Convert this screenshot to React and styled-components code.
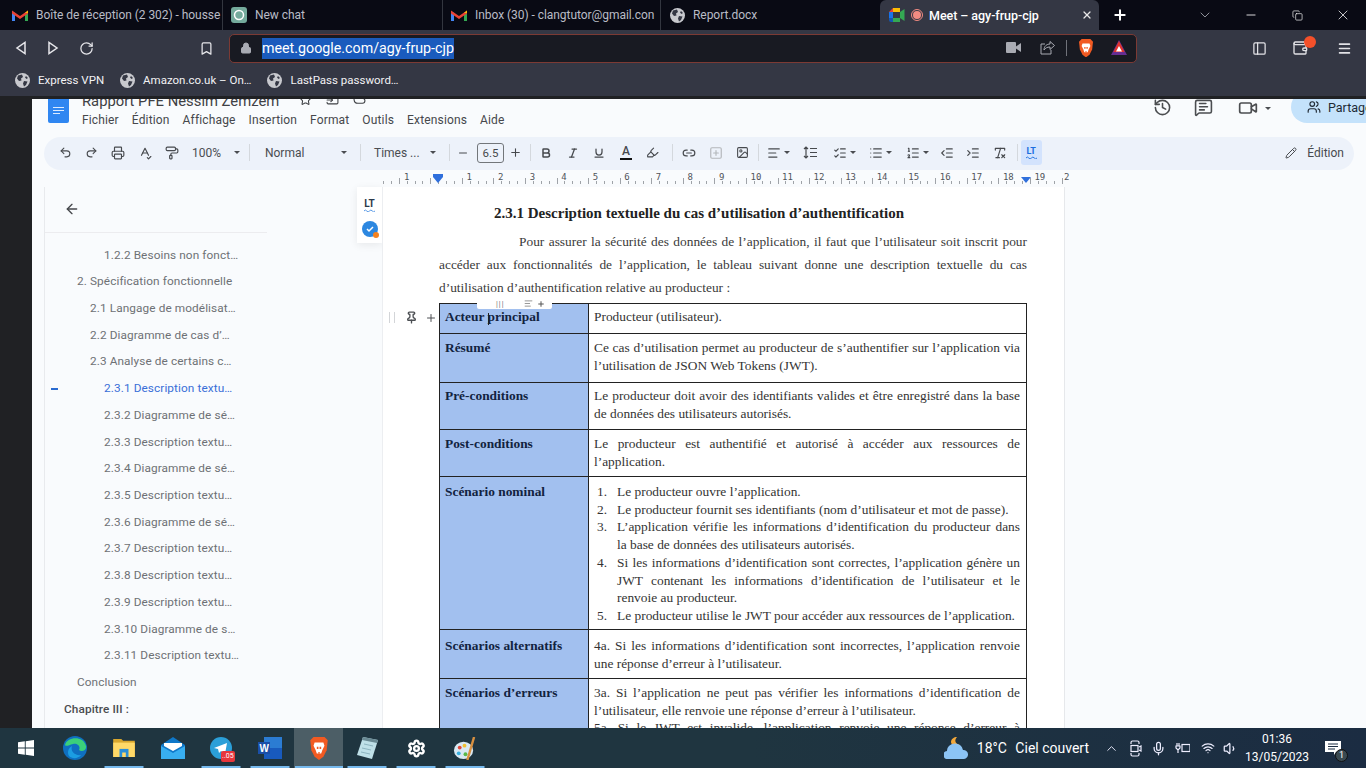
import React from "react";
import styled, { createGlobalStyle } from "styled-components";
import {
  ArrowLeft, AlignLeft, Bold, Cloud, Highlighter, History, Image, IndentDecrease, IndentIncrease, Italic,
  Link2, List, ListChecks, ListOrdered, Lock, MessageSquareText, Minus, PaintRoller, Pencil, Pin, Plus, Printer, Redo2, RemoveFormatting,
  RotateCw, SpellCheck, SquarePlus, Star, Underline, Undo2, Users, Video, X, Bookmark, ChevronDown, Copy, Menu, Wallet, PanelLeft,
  Settings, Mic, Wifi, Volume1, ChevronUp, FolderInput,
} from "lucide-react";

const GlobalStyle = createGlobalStyle`
  html, body { margin: 0; padding: 0; height: 100%; overflow: hidden; }
  body { font-family: "Roboto", "Liberation Sans", sans-serif; background: #202124; }
  * { box-sizing: border-box; }
  #root { height: 100%; }
`;

const Screen = styled.div`
  width: 1366px;
  height: 768px;
  display: flex;
  flex-direction: column;
  overflow: hidden;
  position: relative;
`;

/* ---- browser chrome ---- */
const TabStrip = styled.div`
  height: 30px;
  background: #090a14;
  display: flex;
  align-items: stretch;
  flex: none;
`;
const Tab = styled.div`
  width: ${p => p.$w}px;
  flex: none;
  display: flex;
  align-items: center;
  gap: 8px;
  padding-left: ${p => p.$pad || 8}px;
  font-size: 12px;
  letter-spacing: -0.05px;
  white-space: nowrap;
  overflow: hidden;
  color: #b9bcc6;
  border-right: 1px solid ${p => (p.$plain ? "transparent" : "#33363f")};
  height: 30px;
`;
const ActiveTab = styled(Tab)`
  background: #343744;
  color: #fff;
  font-size: 12.5px;
  font-weight: 500;
  gap: 6px;
  border-radius: 6px 6px 0 0;
  border-right: none;
`;
const TabClose = styled.span`
  display: flex;
  margin-left: auto;
  margin-right: 6px;
  color: #e8e8e8;
`;
const TabIcon = styled.span`
  display: flex;
  flex: none;
  width: 16px;
  height: 16px;
  align-items: center;
  justify-content: center;
`;
const WindowCtl = styled.div`
  flex: 1;
  display: flex;
  align-items: center;
  color: #fff;
`;
const NewTab = styled.span`
  display: flex;
  width: 42px;
  justify-content: center;
`;
const WinButtons = styled.div`
  margin-left: auto;
  display: flex;
  align-items: center;
`;
const WinBtn = styled.span`
  width: 46px;
  display: flex;
  justify-content: center;
  color: ${p => (p.$dim ? "#b0b2ba" : "#f4f4f4")};
`;
const Toolbar = styled.div`
  height: 36px;
  background: #343744;
  display: flex;
  align-items: center;
  flex: none;
  padding-left: 15px;
  color: #e6e6ea;
`;
const NavBtn = styled.span`
  display: flex;
  width: ${p => p.$w || 32}px;
  flex: none;
  justify-content: ${p => (p.$end ? "flex-end" : "flex-start")};
`;
const UrlBar = styled.div`
  width: 908px;
  height: 29px;
  margin-left: 15px;
  background: #181a22;
  border: 1.5px solid #7c3a34;
  border-radius: 5px;
  display: flex;
  align-items: center;
  padding-left: 10px;
  font-size: 14.25px;
  color: #fff;
  flex: none;
`;
const Selected = styled.span`
  background: #1a5bbd;
  margin-left: 10px;
  line-height: 21px;
`;
const UrlRight = styled.div`
  margin-left: auto;
  display: flex;
  align-items: center;
  gap: 11px;
  padding-right: 9px;
  color: #a9abb3;
`;
const UrlGlyph = styled.span`
  display: flex;
  margin-left: ${p => p.$m || 0}px;
`;
const UrlDivider = styled.span`
  width: 1px;
  height: 16px;
  background: #70727a;
`;
const ToolRight = styled.div`
  display: flex;
  align-items: center;
  margin-left: 115px;
  gap: 25px;
  color: #e2e2e6;
`;
const Wal = styled.span`
  position: relative;
  display: flex;
  margin-right: 4px;
`;
const WalDot = styled.span`
  position: absolute;
  top: -4px;
  right: -8px;
  width: 12px;
  height: 12px;
  border-radius: 50%;
  background: #f4502a;
`;
const Bookmarks = styled.div`
  height: 30px;
  background: #343744;
  display: flex;
  align-items: center;
  padding: 0 0 2px 15px;
  gap: 16px;
  font-size: 11.5px;
  color: #f2f2f4;
  flex: none;
`;
const Bm = styled.span`
  display: flex;
  align-items: center;
  gap: 8px;
`;
const Edge = styled.div`
  height: 3px;
  background: #202124;
  flex: none;
`;

/* ---- docs ---- */
const Meet = styled.div`
  flex: 1;
  display: flex;
  min-height: 0;
  background: #202124;
`;
const Docs = styled.div`
  margin-left: 32px;
  flex: 1;
  background: #f9fbfd;
  display: flex;
  flex-direction: column;
  padding-left: 12px;
  min-width: 0;
  overflow: hidden;
`;
const Head = styled.div`
  display: flex;
  flex: none;
  height: 29px;
`;
const DocIcon = styled.div`
  width: 21px;
  height: 24px;
  margin-left: 4px;
  background: #2f86f1;
  border-radius: 0 0 2px 2px;
  flex: none;
  display: flex;
  flex-direction: column;
  gap: 2px;
  padding: 8px 0 0 5px;
`;
const DocLine = styled.span`
  height: 1px;
  width: ${p => p.$w || 11}px;
  background: #dcebff;
`;
const HeadMain = styled.div`
  margin-left: 13px;
  display: flex;
  flex-direction: column;
`;
const DocTitle = styled.div`
  height: 9px;
  display: flex;
  align-items: flex-end;
  gap: 14px;
  font-size: 14.8px;
  color: #3f4145;
  white-space: nowrap;
  svg { margin-bottom: 2px; }
`;
const DocTitleText = styled.span`
  line-height: 14px;
  margin-right: 6px;
`;
const MenuRow = styled.div`
  display: flex;
  gap: 13px;
  font-size: 12px;
  letter-spacing: 0.15px;
  color: #46484c;
  margin-top: 5px;
  line-height: 15px;
`;
const HeadRight = styled.div`
  margin-left: auto;
  display: flex;
  align-items: flex-start;
  color: #4b4d50;
`;
const ShareBtn = styled.div`
  width: 75px;
  height: 32px;
  margin: -8px 0 0 20px;
  background: #c4e2fb;
  border-radius: 16px 0 0 16px;
  display: flex;
  align-items: center;
  gap: 7px;
  padding-left: 16px;
  font-size: 12.5px;
  color: #202a35;
  overflow: hidden;
  white-space: nowrap;
  svg { flex: none; }
`;
const HIcon = styled.span`
  display: flex;
  align-items: center;
  margin: -1px 0 0 ${p => p.$m || 0}px;
`;
const Pill = styled.div`
  height: 33px;
  margin: 9px 12px 0 0;
  background: #edf2fa;
  border-radius: 17px;
  display: flex;
  align-items: center;
  padding: 0 0 2px 8px;
  flex: none;
  color: #474a4e;
  font-size: 12px;
`;
const TB = styled.span`
  display: flex;
  align-items: center;
  justify-content: center;
  width: ${p => p.$w || 26.6}px;
  flex: none;
`;
const Sep = styled.span`
  width: 1px;
  height: 17px;
  background: #d4d8dd;
  margin: 0 ${p => p.$r ?? 7}px 0 ${p => p.$l ?? 7}px;
  flex: none;
`;
const Combo = styled.span`
  display: flex;
  align-items: center;
  width: ${p => p.$w}px;
  padding-left: ${p => p.$pad}px;
  color: #4a4d51;
  flex: none;
`;
const Caret = styled.span`
  margin-left: auto;
  margin-right: ${p => p.$r ?? 6}px;
  width: 0;
  height: 0;
  border-left: 3px solid transparent;
  border-right: 3px solid transparent;
  border-top: 3px solid #4a4d51;
`;
const SmallCaret = styled(Caret)`
  margin: 0 0 0 3px;
  flex: none;
`;
const HeadCaret = styled(SmallCaret)`
  margin: 0 0 0 7px;
`;
const SizeBox = styled.span`
  width: 27px;
  height: 20px;
  margin-left: 7px;
  border: 1px solid #72767a;
  border-radius: 3px;
  text-align: center;
  line-height: 18px;
  font-size: 11.5px;
  flex: none;
`;
const ColorA = styled.span`
  border-bottom: 2px solid #111;
  font-weight: 500;
  line-height: 13px;
  padding: 0 2px;
`;
const LtBtn = styled.span`
  width: 21px;
  height: 25px;
  background: #d3e3fd;
  border-radius: 3px;
  color: #1a6ee0;
  font-size: 9px;
  font-weight: 700;
  display: flex;
  flex-direction: column;
  align-items: center;
  justify-content: center;
  flex: none;
`;
const Edition = styled.span`
  margin-left: auto;
  margin-right: 10px;
  display: flex;
  align-items: center;
  gap: 10px;
`;
const Ruler = styled.div`
  height: 17px;
  flex: none;
  position: relative;
  overflow: hidden;
`;
const RulerNum = styled.span`
  position: absolute;
  top: 2px;
  font-size: 9px;
  line-height: 10px;
  color: #50535a;
  font-family: "DejaVu Sans Mono", monospace;
`;
const RulerTick = styled.span`
  position: absolute;
  bottom: 3px;
  width: 1px;
  height: ${p => (p.$long ? 6 : 3)}px;
  background: #9fa3a8;
`;
const Marker = styled.span`
  position: absolute;
  bottom: 4px;
  width: 0;
  height: 0;
  border-left: 5px solid transparent;
  border-right: 5px solid transparent;
  border-top: 6px solid #2f6fdc;
  &::before {
    content: "";
    display: ${p => (p.$bar ? "block" : "none")};
    position: absolute;
    left: -5px;
    top: -9px;
    width: 10px;
    height: 3px;
    background: #2f6fdc;
  }
`;
const Body = styled.div`
  flex: 1;
  display: flex;
  min-height: 0;
`;
const Side = styled.div`
  width: 338px;
  flex: none;
  display: flex;
  flex-direction: column;
  overflow: hidden;
  border-left: 1px solid #e8eaed;
`;
const Back = styled.div`
  height: 46px;
  margin-right: 115px;
  border-bottom: 1px solid #ececef;
  padding: 14px 0 0 19px;
  color: #45474b;
  flex: none;
`;
const Outline = styled.div`
  padding-top: 8.5px;
  display: flex;
  flex-direction: column;
`;
const Item = styled.div`
  height: 26.72px;
  line-height: 26.72px;
  padding-left: ${p => p.$lvl}px;
  font-size: 11.8px;
  letter-spacing: 0.1px;
  color: ${p => (p.$on ? "#3a6fd8" : p.$strong ? "#4a4c50" : "#6e7175")};
  font-weight: ${p => (p.$strong ? 500 : 400)};
  position: relative;
  white-space: nowrap;
`;
const Dash = styled.span`
  position: absolute;
  left: 6px;
  top: 13px;
  width: 7px;
  height: 1.5px;
  background: #2a6bd0;
`;
const Canvas = styled.div`
  flex: 1;
  display: flex;
  min-width: 0;
  position: relative;
`;
const Lt = styled.div`
  position: absolute;
  left: -25px;
  top: 0;
  width: 25px;
  height: 56px;
  background: #fff;
  box-shadow: 0 2px 8px rgba(0, 0, 0, 0.08);
  display: flex;
  flex-direction: column;
  align-items: center;
  padding-top: 11px;
  gap: 9px;
`;
const LtMark = styled.span`
  display: flex;
  flex-direction: column;
  align-items: center;
  font-size: 10px;
  font-weight: 700;
  color: #2c3a4a;
  line-height: 11px;
`;
const Badge = styled.span`
  width: 16px;
  height: 16px;
  border-radius: 50%;
  background: #2c87e0;
  position: relative;
  display: flex;
  align-items: center;
  justify-content: center;
`;
const BadgeDot = styled.span`
  position: absolute;
  right: -1px;
  bottom: -1px;
  width: 6px;
  height: 6px;
  border-radius: 50%;
  background: #f5821f;
`;
const Page = styled.div`
  width: 683px;
  flex: none;
  background: #fff;
  border-left: 1px solid #eceef1;
  border-right: 1px solid #e6e8eb;
  padding: 17px 37px 0 56px;
  font-family: "Liberation Serif", "Times New Roman", serif;
  color: #2c2c2c;
  position: relative;
  overflow: hidden;
`;
const Heading = styled.div`
  font-weight: 700;
  font-size: 15px;
  line-height: 18px;
  color: #222;
  padding-left: 55px;
  white-space: nowrap;
`;
const Para = styled.p`
  margin: 7.5px 0 4.5px;
  font-size: 13.4px;
  line-height: 23px;
  text-align: justify;
  color: #3a3a3a;
`;
const ParaFirst = styled.span`
  display: inline-block;
  width: 80px;
`;
const Table = styled.div`
  border: 1px solid #222;
  border-bottom: none;
  display: grid;
  grid-template-columns: 149px 1fr;
  font-size: 13.4px;
  line-height: 17.7px;
`;
const Label = styled.div`
  background: #a2c0ef;
  border-bottom: 1px solid #222;
  border-right: 1px solid #222;
  padding: ${p => p.$pad ?? 5}px 6px 0 5px;
  font-weight: 700;
  color: #12233f;
  height: ${p => p.$h}px;
`;
const Cell = styled.div`
  border-bottom: 1px solid #222;
  padding: ${p => p.$pad ?? 5}px 6px 0 5px;
  color: #333;
  text-align: justify;
  height: ${p => p.$h}px;
`;
const ContinuedLine = styled.span`
  display: block;
  text-align-last: justify;
`;
const Steps = styled.ol`
  margin: 0;
  padding: 0 0 0 23px;
  list-style: none;
  counter-reset: step;
`;
const Step = styled.li`
  position: relative;
  counter-increment: step;
  &::before {
    content: counter(step) ".";
    position: absolute;
    left: -20px;
  }
`;
const Handles = styled.div`
  position: absolute;
  left: 6px;
  top: 124px;
  display: flex;
  align-items: center;
  color: #4c4f53;
  gap: 7px;
`;
const Grip = styled.span`
  width: 6px;
  height: 11px;
  border-left: 1px solid #d3d5d8;
  border-right: 1px solid #d3d5d8;
  margin-right: 3px;
`;
const ColBar = styled.div`
  position: absolute;
  left: 94px;
  top: 111px;
  width: 75px;
  height: 11px;
  background: #fff;
  border-radius: 2px;
  display: flex;
  align-items: center;
  color: #777;
  padding-left: 19px;
  font-size: 7px;
  font-family: "Liberation Sans", sans-serif;
`;
const ColGrip = styled.span`
  width: 28px;
  letter-spacing: 1px;
`;
const ColAdd = styled.span`
  display: flex;
  margin-left: 4px;
  color: #555;
`;
const Cursor = styled.span`
  position: absolute;
  left: 105px;
  top: 126px;
  width: 1px;
  height: 12px;
  background: #222;
`;

/* ---- taskbar ---- */
const Taskbar = styled.div`
  height: 40px;
  background: linear-gradient(90deg, #1f3540 0%, #1f3540 55%, #1b2c42 100%);
  display: flex;
  align-items: center;
  flex: none;
`;
const TaskIcon = styled.span`
  width: ${p => p.$w || 48.7}px;
  height: 40px;
  flex: none;
  display: flex;
  align-items: center;
  justify-content: center;
  position: relative;
  background: ${p => (p.$on ? "#4c5e66" : "transparent")};
  &::after {
    content: "";
    display: ${p => (p.$run ? "block" : "none")};
    position: absolute;
    bottom: 0;
    left: 50%;
    transform: translateX(-50%);
    width: ${p => (p.$on ? 48 : 39)}px;
    height: 2px;
    background: #76b9ed;
  }
`;
const TeleBadge = styled.span`
  position: absolute;
  left: 24px;
  bottom: 6px;
  background: #e8363c;
  color: #fff;
  font-size: 7px;
  line-height: 9px;
  padding: 1px;
  border-radius: 2px;
`;
const Tray = styled.div`
  margin: 0 11px 0 auto;
  display: flex;
  align-items: center;
  color: #fff;
  font-size: 14px;
`;
const Weather = styled.span`
  display: flex;
  align-items: center;
  gap: 8.5px;
  margin-right: 10.5px;
  white-space: nowrap;
`;
const TrayIcon = styled.span`
  display: flex;
  width: ${p => p.$w}px;
  justify-content: center;
  color: #eef;
`;
const Clock = styled.div`
  width: 68px;
  margin-left: 3.5px;
  text-align: center;
  font-size: 12px;
  line-height: 18px;
`;
const Notif = styled.div`
  width: 44px;
  display: flex;
  justify-content: center;
  position: relative;
`;
const NotifCount = styled.span`
  position: absolute;
  left: 24px;
  top: 8px;
  width: 13px;
  height: 13px;
  background: #3a4a52;
  border-radius: 50%;
  border: 1px solid #111;
  font-size: 9px;
  text-align: center;
  line-height: 11px;
`;

const Gmail = () => (
  <svg width="16" height="12" viewBox="0 0 16 12">
    <path d="M0 12V2l3 2v8z" fill="#4285f4" />
    <path d="M13 12V4l3-2v10z" fill="#34a853" />
    <path d="M0 1.500 8 7l8-5.500v3L8 10 0 4.500z" fill="#ea4335" />
    <path d="M13 4l3-2.500V4z" fill="#fbbc04" />
  </svg>
);
const MeetLogo = () => (
  <svg width="16" height="14" viewBox="0 0 16 14">
    <path d="M0 4 4 0v4z" fill="#ea4335" />
    <path d="M0 4h4v6H0z" fill="#1a73e8" />
    <path d="M0 10h4v4H2a2 2 0 0 1-2-2z" fill="#1557b0" />
    <path d="M4 10h7v4H4z" fill="#34a853" />
    <path d="M11 4 15.500 1v12L11 10z" fill="#34a853" />
    <path d="M4 0h7v4H4z" fill="#fbbc04" />
  </svg>
);
const GlobeSolid = () => (
  <svg width="15" height="15" viewBox="0 0 15 15">
    <circle cx="7.500" cy="7.500" r="7.500" fill="#c8c9ce" />
    <path d="M3 2.500 7 1.500 8 4 6 5.500 6.500 7.500 4 8 2 5.500zM9 8l3.500.5L11 12l-2 1.500-1-3zM11 3l2 2-1.500 1L10 4.500z" fill="#343744" />
  </svg>
);
const Lion = ({ size = 18 }) => (
  <svg width={size} height={size * 1.15} viewBox="0 0 18 21">
    <path d="M4 0h10l3 3-1 9-3 6-4 3-4-3-3-6-1-9z" fill="#f15a22" />
    <path d="M5 5h8l1 3-2 4-1 3H7l-1-3-2-4z" fill="#fff" />
    <path d="M7 9h1.500v2H7zM9.500 9H11v2H9.500zM8 14h2l-1 2z" fill="#f15a22" />
  </svg>
);
const Triangle = () => (
  <svg width="16" height="15" viewBox="0 0 16 15">
    <path d="M8 0 16 15H0z" fill="#662d91" />
    <path d="M8 1 13.500 12H2.500z" fill="#e2342b" />
    <path d="M8 6l3 5.500H5z" fill="#fff" />
  </svg>
);
const CamFill = () => (
  <svg width="15" height="11" viewBox="0 0 15 11" fill="#a9abb3">
    <rect width="10" height="11" rx="1" />
    <path d="M10 4.500 15 1v9l-5-3.500z" />
  </svg>
);
const ShareOut = () => (
  <svg width="15" height="15" viewBox="0 0 15 15" fill="none" stroke="#a9abb3">
    <path d="M5 4H1v10h10v-4" />
    <path d="M4 10c0-4 3-6 6-6V1.500L14.500 5.500 10 9.500V7c-3 0-4.500 1-6 3z" />
  </svg>
);
const LineSpacing = () => (
  <svg width="14" height="13" viewBox="0 0 14 13" fill="none" stroke="#474a4e" strokeWidth="1.200">
    <path d="M7 2.500h7M7 6.500h7M7 10.500h7M3 1v11M1 3l2-2 2 2M1 10l2 2 2-2" />
  </svg>
);
const Wave = ({ width = 11, color = "#4a90e2" }) => (
  <svg width={width} height="3" viewBox="0 0 12 3" fill="none" stroke={color}>
    <path d="M0 2q1.500-2 3 0t3 0 3 0 3 0" />
  </svg>
);
const WinLogo = () => (
  <svg width="16" height="16" viewBox="0 0 16 16" fill="#fff">
    <path d="M0 2.300 6.800 1.300V7.500H0zM7.700 1.200 16 0v7.500H7.700zM0 8.400h6.800v6.300L0 13.700zM7.700 8.400H16V16l-8.300-1.200z" />
  </svg>
);
const EdgeLogo = () => (
  <svg width="24" height="24" viewBox="0 0 24 24">
    <circle cx="12" cy="12" r="12" fill="#0f6fc0" />
    <path d="M2 9C4 1 20-1 23 10c1 5-5 6-7 4 2-4-2-7-6-6-4 1-7 3-8 1z" fill="#3bd07a" />
    <path d="M9 10c-2 5 3 10 9 9-3 4-9 4-12 1-2-3-1-8 3-10z" fill="#1b9de2" />
  </svg>
);
const Folder = () => (
  <svg width="22" height="18" viewBox="0 0 24 20">
    <path d="M0 0h9l2 2h13v18H0z" fill="#d9a72e" />
    <path d="M0 4h24v16H0z" fill="#ffd968" />
    <path d="M7 11h10v9H7z" fill="#2a8fd8" />
    <path d="M10 15h4v5h-4z" fill="#ffd968" />
  </svg>
);
const Mail = () => (
  <svg width="24" height="22" viewBox="0 0 24 22">
    <path d="M0 8 12 0l12 8v14H0z" fill="#0f78c9" />
    <path d="M0 9l12 7 12-7v13H0z" fill="#38aef0" />
    <path d="M3 6h18v3l-9 5-9-5z" fill="#fff" />
  </svg>
);
const Telegram = () => (
  <svg width="22" height="22" viewBox="0 0 22 22">
    <circle cx="11" cy="11" r="11" fill="#2b9fd8" />
    <path d="M4 11 17 6l-2 11-4-3-2 2-1-4z" fill="#fff" />
  </svg>
);
const Word = () => (
  <svg width="24" height="22" viewBox="0 0 24 22">
    <path d="M6 0h18v22H6z" fill="#2b7cd3" />
    <path d="M6 11h18v11H6z" fill="#185abd" />
    <path d="M0 5h12v12H0z" fill="#1a4fa8" />
    <text x="1.500" y="15" fontSize="10" fontWeight="700" fill="#fff" fontFamily="Liberation Sans">W</text>
  </svg>
);
const Notepad = () => (
  <svg width="23" height="22" viewBox="0 0 23 22">
    <path d="M7 0 22 3 16 22 1 18z" fill="#bfe0e8" />
    <path d="M7 0 22 3 21 6 6 3z" fill="#6a8a94" />
    <path d="M8 7l9 2M6 11l9 2M5 15l9 2" stroke="#8db4c0" />
  </svg>
);
const Paint = () => (
  <svg width="23" height="23" viewBox="0 0 24 24">
    <ellipse cx="11" cy="14" rx="10" ry="9" fill="#d8e8f2" />
    <circle cx="7" cy="11" r="2" fill="#e0473a" />
    <circle cx="12" cy="9" r="2" fill="#f0c030" />
    <circle cx="6" cy="17" r="2" fill="#3ab0e0" />
    <circle cx="13" cy="18" r="2" fill="#58b848" />
    <path d="M22 0 15 24" stroke="#d89040" strokeWidth="2.500" />
  </svg>
);
const CloudMoon = () => (
  <svg width="24" height="22" viewBox="0 0 24 22">
    <path d="M13 0c-3 3-2 7 3 8-4 2-9 0-9-3 0-3 3-5 6-5z" fill="#f3a83b" />
    <path d="M4 22a4 4 0 0 1-1-8 8 7 0 0 1 16-1 4.500 4.500 0 0 1 1 9z" fill="#8cc4f5" />
  </svg>
);
const WebCam = () => (
  <svg width="12" height="17" viewBox="0 0 12 17" fill="none" stroke="#eef" strokeWidth="1.200">
    <path d="M1 4V2.500A1.500 1.500 0 0 1 2.500 1h5A1.500 1.500 0 0 1 9 2.500V4M1 13v1.500A1.500 1.500 0 0 0 2.500 16h5A1.500 1.500 0 0 0 9 14.500V13" />
    <rect x="1" y="5.500" width="7" height="6" />
    <path d="M9 7l2-1v5l-2-1" />
  </svg>
);
const PowerPlug = () => (
  <svg width="15" height="12" viewBox="0 0 15 12" fill="none" stroke="#eef" strokeWidth="1.200">
    <path d="M2 1v3M4 1v3M1 4h4v2l-2 2-2-2zM3 8v3" />
    <rect x="7" y="2.500" width="8" height="7" />
  </svg>
);
const NotifNote = () => (
  <svg width="16" height="14" viewBox="0 0 16 14">
    <path d="M0 0h16v11h-5l-2 3v-3H0z" fill="#fff" />
    <path d="M3 3h10M3 5.500h10M3 8h7" stroke="#1b2c42" />
  </svg>
);

const outline = [
  ["1.2.2 Besoins non fonct…", 59],
  ["2. Spécification fonctionnelle", 32],
  ["2.1 Langage de modélisat…", 45],
  ["2.2 Diagramme de cas d’…", 45],
  ["2.3 Analyse de certains c…", 45],
  ["2.3.1 Description textu…", 59, true],
  ["2.3.2 Diagramme de sé…", 59],
  ["2.3.3 Description textu…", 59],
  ["2.3.4 Diagramme de sé…", 59],
  ["2.3.5 Description textu…", 59],
  ["2.3.6 Diagramme de sé…", 59],
  ["2.3.7 Description textu…", 59],
  ["2.3.8 Description textu…", 59],
  ["2.3.9 Description textu…", 59],
  ["2.3.10 Diagramme de s…", 59],
  ["2.3.11 Description textu…", 59],
  ["Conclusion", 32],
];

const rulerNums = [
  [407, "1"],
  ...Array.from({ length: 19 }, (_, i) => [438 + 31.55 * (i + 1), String(i + 1)]),
  [1067, "2"],
];

export default function App() {
  return (
    <>
      <GlobalStyle />
      <Screen>
        <TabStrip>
          <Tab $w={223} $pad={12}><TabIcon><Gmail /></TabIcon>Boîte de réception (2 302) - housse</Tab>
          <Tab $w={220}><TabIcon><svg width="16" height="16" viewBox="0 0 16 16"><rect width="16" height="16" rx="3" fill="#74aa9c" /><circle cx="8" cy="8" r="4.500" fill="none" stroke="#fff" strokeWidth="1.500" /></svg></TabIcon>New chat</Tab>
          <Tab $w={218}><TabIcon><Gmail /></TabIcon>Inbox (30) - clangtutor@gmail.con</Tab>
          <Tab $w={219} $plain><TabIcon><GlobeSolid /></TabIcon>Report.docx</Tab>
          <ActiveTab $w={219} $pad={9}>
            <MeetLogo />
            <svg width="12" height="12" viewBox="0 0 12 12"><circle cx="6" cy="6" r="5.500" fill="none" stroke="#f28b82" /><circle cx="6" cy="6" r="4" fill="#f28b82" /></svg>
            Meet – agy-frup-cjp
            <TabClose><X size={12} strokeWidth={2.5} /></TabClose>
          </ActiveTab>
          <WindowCtl>
            <NewTab><Plus size={16} strokeWidth={3} /></NewTab>
            <WinButtons>
              <WinBtn $dim><ChevronDown size={16} strokeWidth={1.2} /></WinBtn>
              <WinBtn><Minus size={14} strokeWidth={1.5} /></WinBtn>
              <WinBtn><Copy size={11} strokeWidth={1.5} /></WinBtn>
              <WinBtn><X size={16} strokeWidth={1.2} /></WinBtn>
            </WinButtons>
          </WindowCtl>
        </TabStrip>
        <Toolbar>
          <NavBtn><svg width="13" height="14" viewBox="0 0 13 14" fill="none" stroke="#e6e6ea" strokeWidth="1.500"><path d="M10 1.500v11L2 7z" /></svg></NavBtn>
          <NavBtn><svg width="13" height="14" viewBox="0 0 13 14" fill="none" stroke="#e6e6ea" strokeWidth="1.500"><path d="M2 1.500v11L10 7z" /></svg></NavBtn>
          <NavBtn $w={27}><RotateCw size={15} /></NavBtn>
          <NavBtn $w={108} $end><Bookmark size={15} /></NavBtn>
          <UrlBar>
            <Lock size={12} fill="#a9abb3" color="#a9abb3" />
            <Selected>meet.google.com/agy-frup-cjp</Selected>
            <UrlRight>
              <CamFill />
              <UrlGlyph $m={8}><ShareOut /></UrlGlyph>
              <UrlDivider />
              <Lion size={16} />
              <UrlGlyph $m={6}><Triangle /></UrlGlyph>
            </UrlRight>
          </UrlBar>
          <ToolRight>
            <PanelLeft size={15} />
            <Wal><Wallet size={16} /><WalDot /></Wal>
            <Menu size={15} strokeWidth={2.5} />
          </ToolRight>
        </Toolbar>
        <Bookmarks>
          <Bm><GlobeSolid />Express VPN</Bm>
          <Bm><GlobeSolid />Amazon.co.uk – On…</Bm>
          <Bm><GlobeSolid />LastPass password…</Bm>
        </Bookmarks>
        <Edge />
        <Meet>
          <Docs>
            <Head>
              <DocIcon><DocLine /><DocLine /><DocLine $w={7} /></DocIcon>
              <HeadMain>
                <DocTitle>
                  <DocTitleText>Rapport PFE Nessim Zemzem</DocTitleText>
                  <Star size={13} /><FolderInput size={13} /><Cloud size={13} />
                </DocTitle>
                <MenuRow>
                  <span>Fichier</span><span>Édition</span><span>Affichage</span><span>Insertion</span>
                  <span>Format</span><span>Outils</span><span>Extensions</span><span>Aide</span>
                </MenuRow>
              </HeadMain>
              <HeadRight>
                <HIcon><History size={19} /></HIcon>
                <HIcon $m={22}><MessageSquareText size={19} /></HIcon>
                <HIcon $m={25}><Video size={20} /><HeadCaret /></HIcon>
                <ShareBtn><Users size={14} />Partager</ShareBtn>
              </HeadRight>
            </Head>
            <Pill>
              <TB><Undo2 size={13} /></TB><TB><Redo2 size={13} /></TB><TB><Printer size={14} /></TB><TB><SpellCheck size={14} /></TB><TB><PaintRoller size={14} /></TB>
              <Combo $w={57} $pad={7}>100%<Caret $r={2} /></Combo>
              <Sep />
              <Combo $w={96} $pad={8}>Normal<Caret /></Combo>
              <Sep />
              <Combo $w={74} $pad={6}>Times ...<Caret /></Combo>
              <Sep />
              <TB $w={13}><Minus size={12} /></TB><SizeBox>6.5</SizeBox><TB $w={24}><Plus size={13} /></TB>
              <Sep $l={2} $r={2} />
              <TB><Bold size={12} strokeWidth={3} /></TB><TB><Italic size={12} strokeWidth={2.5} /></TB><TB><Underline size={12} strokeWidth={2.5} /></TB><TB><ColorA>A</ColorA></TB><TB><Highlighter size={13} /></TB>
              <Sep $l={6} $r={3} />
              <TB><Link2 size={14} /></TB><TB><SquarePlus size={14} color="#b4b7bb" /></TB><TB><Image size={13} /></TB>
              <Sep $l={2} $r={3} />
              <TB $w={34}><AlignLeft size={14} /><SmallCaret /></TB>
              <TB $w={28}><LineSpacing /></TB>
              <TB $w={41}><ListChecks size={14} /><SmallCaret /></TB>
              <TB $w={32}><List size={14} /><SmallCaret /></TB>
              <TB $w={41}><ListOrdered size={14} /><SmallCaret /></TB>
              <TB $w={18}><IndentDecrease size={14} /></TB>
              <TB $w={34}><IndentIncrease size={14} /></TB>
              <TB $w={20}><RemoveFormatting size={14} /></TB>
              <Sep $l={7} $r={3} />
              <LtBtn>LT<Wave width={11} color="#1a6ee0" /></LtBtn>
              <Edition><Pencil size={12} />Édition</Edition>
            </Pill>
            <Ruler>
              {rulerNums.map(([x, n]) => <RulerNum key={x} style={{ left: x - 47 }}>{n}</RulerNum>)}
              {Array.from({ length: 87 }, (_, i) => <RulerTick key={i} $long={i % 4 === 2} style={{ left: 339 + i * 7.89 }} />)}
              <Marker $bar style={{ left: 389 }} /><Marker style={{ left: 977 }} />
            </Ruler>
            <Body>
              <Side>
                <Back><ArrowLeft size={16} /></Back>
                <Outline>
                  {outline.map(([t, l, on]) => (
                    <Item key={t} $lvl={l} $on={on}>{on && <Dash />}{t}</Item>
                  ))}
                  <Item $lvl={19} $strong>Chapitre III :</Item>
                </Outline>
              </Side>
              <Canvas>
                <Lt>
                  <LtMark>LT<Wave /></LtMark>
                  <Badge><svg width="10" height="10" viewBox="0 0 10 10" fill="none" stroke="#fff" strokeWidth="1.500"><path d="m2 5 2 2 4-4" /></svg><BadgeDot /></Badge>
                </Lt>
                <Page>
                  <Heading>2.3.1 Description textuelle du cas d’utilisation d’authentification</Heading>
                  <Para><ParaFirst />Pour assurer la sécurité des données de l’application, il faut que l’utilisateur soit inscrit pour accéder aux fonctionnalités de l’application, le tableau suivant donne une description textuelle du cas d’utilisation d’authentification relative au producteur :</Para>
                  <Table>
                    <Label $h={30} $pad={4}>Acteur principal</Label><Cell $h={30} $pad={4}>Producteur (utilisateur).</Cell>
                    <Label $h={49}>Résumé</Label><Cell $h={49}>Ce cas d’utilisation permet au producteur de s’authentifier sur l’application via l’utilisation de JSON Web Tokens (JWT).</Cell>
                    <Label $h={47} $pad={4}>Pré-conditions</Label><Cell $h={47} $pad={4}>Le producteur doit avoir des identifiants valides et être enregistré dans la base de données des utilisateurs autorisés.</Cell>
                    <Label $h={47}>Post-conditions</Label><Cell $h={47}>Le producteur est authentifié et autorisé à accéder aux ressources de l’application.</Cell>
                    <Label $h={153} $pad={6}>Scénario nominal</Label>
                    <Cell $h={153} $pad={6}>
                      <Steps>
                        <Step>Le producteur ouvre l’application.</Step>
                        <Step>Le producteur fournit ses identifiants (nom d’utilisateur et mot de passe).</Step>
                        <Step>L’application vérifie les informations d’identification du producteur dans la base de données des utilisateurs autorisés.</Step>
                        <Step>Si les informations d’identification sont correctes, l’application génère un JWT contenant les informations d’identification de l’utilisateur et le renvoie au producteur.</Step>
                        <Step>Le producteur utilise le JWT pour accéder aux ressources de l’application.</Step>
                      </Steps>
                    </Cell>
                    <Label $h={49} $pad={7}>Scénarios alternatifs</Label><Cell $h={49} $pad={7}>4a. Si les informations d’identification sont incorrectes, l’application renvoie une réponse d’erreur à l’utilisateur.</Cell>
                    <Label>Scénarios d’erreurs</Label>
                    <Cell>3a. Si l’application ne peut pas vérifier les informations d’identification de l’utilisateur, elle renvoie une réponse d’erreur à l’utilisateur.<ContinuedLine>5a. Si le JWT est invalide, l’application renvoie une réponse d’erreur à</ContinuedLine></Cell>
                  </Table>
                  <Handles><Grip /><Pin size={13} strokeWidth={2.5} /><Plus size={12} /></Handles>
                  <ColBar><ColGrip>|||</ColGrip><AlignLeft size={9} /><ColAdd><Plus size={8} strokeWidth={3} /></ColAdd></ColBar>
                  <Cursor />
                </Page>
              </Canvas>
            </Body>
          </Docs>
        </Meet>
        <Taskbar>
          <TaskIcon $w={51}><WinLogo /></TaskIcon>
          <TaskIcon><EdgeLogo /></TaskIcon>
          <TaskIcon $run><Folder /></TaskIcon>
          <TaskIcon><Mail /></TaskIcon>
          <TaskIcon $run><Telegram /><TeleBadge>..05</TeleBadge></TaskIcon>
          <TaskIcon $run><Word /></TaskIcon>
          <TaskIcon $on $run><Lion size={20} /></TaskIcon>
          <TaskIcon $run><Notepad /></TaskIcon>
          <TaskIcon $run><Settings size={19} strokeWidth={3} color="#fff" /></TaskIcon>
          <TaskIcon $run><Paint /></TaskIcon>
          <Tray>
            <Weather><CloudMoon /><span>18°C</span><span>Ciel couvert</span></Weather>
            <TrayIcon $w={24}><ChevronUp size={15} strokeWidth={1.5} /></TrayIcon>
            <TrayIcon $w={24}><WebCam /></TrayIcon>
            <TrayIcon $w={22}><Mic size={15} /></TrayIcon>
            <TrayIcon $w={26}><PowerPlug /></TrayIcon>
            <TrayIcon $w={25}><Wifi size={14} /></TrayIcon>
            <TrayIcon $w={19}><Volume1 size={15} /></TrayIcon>
            <Clock>01:36<br />13/05/2023</Clock>
            <Notif><NotifNote /><NotifCount>1</NotifCount></Notif>
          </Tray>
        </Taskbar>
      </Screen>
    </>
  );
}
